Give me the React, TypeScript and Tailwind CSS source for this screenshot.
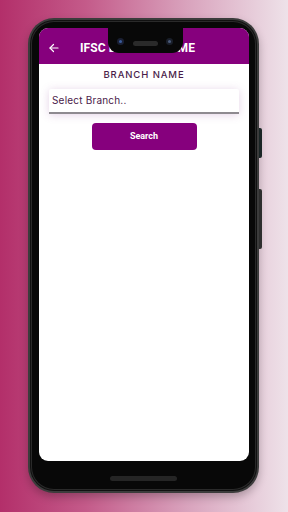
import React from "react";

export default function App() {
  return (
    <div className="relative w-[288px] h-[512px] overflow-hidden bg-[linear-gradient(90deg,#b32f6a_0%,#c45b8a_30%,#d9a3bd_65%,#eee2e9_100%)] pt-[18px] pl-[28px]">
      {/* side buttons */}
      <div className="absolute left-[258px] top-[128px] w-[4px] h-[30px] bg-[#1e2a2a] rounded-r-[2px]" />
      <div className="absolute left-[258px] top-[189px] w-[4px] h-[60px] bg-[#333] rounded-r-[2px]" />
      {/* phone */}
      <div className="relative w-[231px] h-[475px] rounded-[26px] bg-[#3c3c3c] p-[2px] shadow-[0_4px_8px_rgba(0,0,0,0.25)]">
        <div className="w-full h-full rounded-[24px] bg-[#111] p-[1px]">
          <div className="w-full h-full rounded-[23px] bg-[#2a2a2a] p-[1px]">
            <div className="w-full h-full rounded-[22px] bg-[#080808] pt-[6px] pl-[7px] pr-[6px] pb-[28px] flex flex-col">
              <div className="relative flex-1 rounded-[9px] overflow-hidden bg-white flex flex-col">
                {/* app bar */}
                <div className="h-[36px] bg-[#86007d] flex items-center pl-[9px] shrink-0" >
                  <svg width="12" height="12" viewBox="0 0 24 24" fill="none" stroke="white" strokeWidth="2.4" strokeLinecap="round" strokeLinejoin="round" className="mt-[4px]">
                    <path d="M20 12H4" />
                    <path d="M11 5l-7 7 7 7" />
                  </svg>
                  <span className="ml-[20px] mt-[4px] text-white font-bold text-[12px] tracking-[0.1px] font-['Roboto',sans-serif]">
                    IFSC BRANCH NAME
                  </span>
                </div>
                {/* notch */}
                <div className="absolute left-[69px] top-0 w-[75px] h-[25px] bg-[#080808] rounded-b-[11px]">
                  <div className="absolute left-[9px] top-[10px] w-[7px] h-[7px] rounded-full bg-[#1a1f33] flex items-center justify-center">
                    <div className="w-[3px] h-[3px] rounded-full bg-[#3a5a9a]" />
                  </div>
                  <div className="absolute left-[25px] top-[13px] w-[25px] h-[5px] rounded-full bg-[#2a2a2a]" />
                  <div className="absolute left-[58px] top-[10px] w-[7px] h-[7px] rounded-full bg-[#1a1f2a] flex items-center justify-center">
                    <div className="w-[3px] h-[3px] rounded-full bg-[#4a5a7a]" />
                  </div>
                </div>
                {/* content */}
                <div className="flex flex-col items-center">
                  <div className="mt-[4px] text-[9.5px] leading-[14px] tracking-[0.9px] text-[#4a1d4a] font-['Inter',sans-serif] font-medium">
                    BRANCH NAME
                  </div>
                  <div className="mt-[7px] w-[190px] h-[25px] bg-white border-b-[2px] border-[#8e8a90] rounded-t-[2px] shadow-[0_1px_8px_rgba(150,80,160,0.25)] flex items-center pl-[3px]">
                    <span className="text-[10px] text-[#4a1a4a] font-['Inter',sans-serif] tracking-[0.2px]">
                      Select Branch..
                    </span>
                  </div>
                  <div className="mt-[9px] w-[105px] h-[27px] bg-[#86007d] rounded-[4px] flex items-center justify-center">
                    <span className="text-white font-bold text-[9px] font-['Roboto',sans-serif]">
                      Search
                    </span>
                  </div>
                </div>
              </div>
            </div>
          </div>
        </div>
        <div className="absolute left-[82px] bottom-[12px] w-[67px] h-[5px] rounded-full bg-[#252525]" />
      </div>
    </div>
  );
}
